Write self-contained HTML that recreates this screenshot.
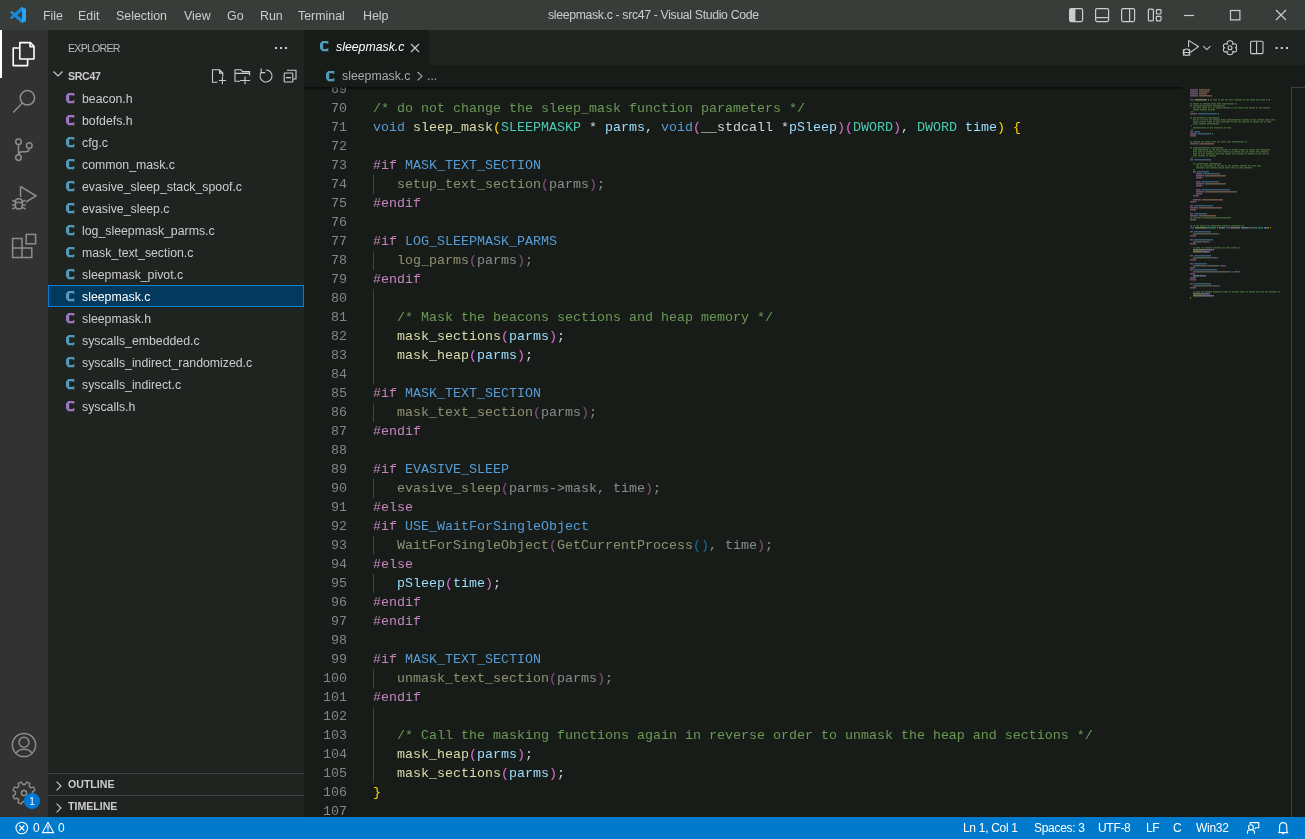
<!DOCTYPE html>
<html><head><meta charset="utf-8"><style>
*{margin:0;padding:0;box-sizing:border-box}
#root{position:absolute;left:0;top:0;width:1305px;height:839px;overflow:hidden;will-change:transform}
html,body{width:1305px;height:839px;overflow:hidden;background:#181c18;font-family:"Liberation Sans",sans-serif}
.abs{position:absolute}
svg{overflow:visible}
#title{position:absolute;left:0;top:0;width:1305px;height:30px;background:#393d39}
.menu{position:absolute;top:8px;font-size:12.4px;color:#cccccc;line-height:16px}
#ttl{position:absolute;left:548px;top:7px;font-size:12.3px;letter-spacing:-0.35px;color:#cccccc;line-height:16px}
#act{position:absolute;left:0;top:30px;width:48px;height:787px;background:#323232}
#side{position:absolute;left:48px;top:30px;width:256px;height:787px;background:#202420}
#tabs{position:absolute;left:304px;top:30px;width:1001px;height:35px;background:#202420}
#tab{position:absolute;left:0;top:0;width:125px;height:35px;background:#181c18}
#bc{position:absolute;left:304px;top:65px;width:1001px;height:22px;background:#181c18}
#ed{position:absolute;left:304px;top:87px;width:1001px;height:730px;background:#181c18;overflow:hidden}
#code{position:absolute;left:0;top:-87px;width:1001px;height:817px}
.ln{position:absolute;left:0;width:43px;text-align:right;font-family:"Liberation Mono",monospace;font-size:13.33px;line-height:19px;height:19px;color:#858585;white-space:pre}
.cl{position:absolute;left:69.0px;font-family:"Liberation Mono",monospace;font-size:13.33px;line-height:19px;height:19px;white-space:pre}
.guide{position:absolute;left:69px;width:1px;height:19px;background:#404040}
#shadow{position:absolute;left:304px;top:87px;width:878px;height:3px;background:linear-gradient(#00000099,#00000022)}
.mm{position:absolute;height:2px;opacity:.45;border-bottom:1px solid rgba(26,29,27,.45)}
#status{position:absolute;left:0;top:817px;width:1305px;height:22px;background:#007acc;color:#fff;font-size:12px;letter-spacing:-0.3px}
#status span{position:absolute;top:3.5px;line-height:14px}
.row{position:absolute;left:0;width:256px;height:22px;color:#cccccc;font-size:12.3px;line-height:24px}
.fn{position:absolute;left:34px;top:0}
.sec{position:absolute;left:0;width:256px;height:22px;border-top:1px solid #414141;color:#cccccc;font-size:10.6px;font-weight:bold;line-height:21px}
</style></head><body><div id="root">
<div id="title">
<svg class="abs" style="left:10px;top:7px" width="16" height="16" viewBox="0 0 100 100"><path fill="#1a86d4" fill-rule="evenodd" d="M70.9 99.3c1.6.6 3.4.6 5-.2l20.6-9.9c2.2-1 3.5-3.2 3.5-5.6V16.4c0-2.4-1.4-4.6-3.5-5.6L75.9.9c-2.1-1-4.5-.8-6.4.6-.3.2-.5.4-.7.7L29.4 38.2 12.3 25.2c-1.6-1.2-3.8-1.1-5.3.2L1.5 30.5c-1.8 1.7-1.8 4.5 0 6.2L16.3 50 1.5 63.4c-1.8 1.7-1.8 4.5 0 6.2l5.5 5c1.5 1.4 3.7 1.5 5.3.3l17.1-13 39.4 35.9c.6.6 1.3 1.1 2.1 1.4zm4.1-72.1L45.1 50 75 72.7V27.2z"/><path fill="#2aa4f0" d="M75.5 1L96.5 10.8Q100 12.6 100 16.4V83.6Q100 87.4 96.5 89.2L75.5 99Z"/></svg>
<div class="menu" style="left:43px">File</div><div class="menu" style="left:78px">Edit</div><div class="menu" style="left:116px">Selection</div><div class="menu" style="left:184px">View</div><div class="menu" style="left:227px">Go</div><div class="menu" style="left:260px">Run</div><div class="menu" style="left:298px">Terminal</div><div class="menu" style="left:363px">Help</div>
<div id="ttl">sleepmask.c - src47 - Visual Studio Code</div>
<svg class="abs" style="left:0;top:0" width="1305" height="30">
<g fill="none" stroke="#cccccc" stroke-width="1.2">
<rect x="1069.6" y="8.6" width="13" height="13" rx="1.5"/>
<rect x="1095.6" y="8.6" width="13" height="13" rx="1.5"/><path d="M1095.6 17.6H1108.6"/>
<rect x="1121.6" y="8.6" width="13" height="13" rx="1.5"/><path d="M1129.6 8.6V21.6"/>
<rect x="1148.4" y="9.2" width="5" height="11.6" rx="1"/>
<rect x="1156.4" y="9.6" width="4.6" height="4.4" rx=".8"/>
<rect x="1156.4" y="16.4" width="4.6" height="4.4" rx=".8"/>
<path d="M1184 15.5H1194"/>
<rect x="1230.5" y="10.5" width="9.4" height="9.4"/>
<path d="M1276 10L1286 20M1286 10L1276 20"/>
</g>
<rect x="1070" y="9" width="5.4" height="12.4" fill="#cccccc"/>
</svg>
</div>
<div id="act"><svg class="abs" style="left:0;top:0" width="48" height="787" viewBox="0 30 48 787">
<rect x="0" y="30" width="2" height="48" fill="#ffffff"/>
<g fill="none" stroke="#ffffff" stroke-width="1.6" stroke-linejoin="round">
<path d="M19.8 42.6H30.4L34 46.2V59H19.8Z"/>
<path d="M30 42.6V46.6H34"/>
<path d="M19.8 48H13.2V65.6H27.6V59"/>
</g>
<g fill="none" stroke="#8a8f8a" stroke-width="1.5">
<circle cx="27.4" cy="97.8" r="7.2"/>
<path d="M22.3 103L13.2 112.6"/>
<circle cx="18.5" cy="141.8" r="2.8"/>
<circle cx="18.5" cy="157.6" r="2.8"/>
<circle cx="29.3" cy="145.6" r="2.8"/>
<path d="M18.5 144.6V154.8"/>
<path d="M29.3 148.4Q29 151.6 25.5 151.8H22Q18.8 152 18.6 154.8"/>
<path d="M20.5 186.5V197M20.5 186.5L36 195.8L26 202"/>
<rect x="15.4" y="198.8" width="6.8" height="10.2" rx="3"/>
<path d="M15.4 202.4H22.2M12.2 200.2L15.4 202M25.4 200.2L22.2 202M12 204.9H15.4M22.2 204.9H25.6M12.2 209L15.4 207.4M25.4 209L22.2 207.4"/>
<path d="M12.6 238.6H22V248H31.8V257.6H12.6ZM12.6 248H22V257.6"/>
<rect x="26.2" y="234.4" width="9.4" height="9.4"/>
<circle cx="24" cy="745" r="11.6"/>
<circle cx="24" cy="742.2" r="5"/>
<path d="M15.6 753.4Q18.5 749.2 24 749.2Q29.5 749.2 32.4 753.4"/>
</g>
<g transform="translate(24 793)">
<path fill="none" stroke="#8a8f8a" stroke-width="1.4" stroke-linejoin="round" d="M1.12 -8.53L2.73 -10.96L5.82 -9.69L5.24 -6.82L6.82 -5.24L9.69 -5.82L10.96 -2.73L8.53 -1.12L8.53 1.12L10.96 2.73L9.69 5.82L6.82 5.24L5.24 6.82L5.82 9.69L2.73 10.96L1.12 8.53L-1.12 8.53L-2.73 10.96L-5.82 9.69L-5.24 6.82L-6.82 5.24L-9.69 5.82L-10.96 2.73L-8.53 1.12L-8.53 -1.12L-10.96 -2.73L-9.69 -5.82L-6.82 -5.24L-5.24 -6.82L-5.82 -9.69L-2.73 -10.96L-1.12 -8.53Z"/>
<circle cx="0" cy="0" r="2.6" fill="none" stroke="#8a8f8a" stroke-width="1.5"/>
</g>
<circle cx="32" cy="801" r="8" fill="#0078d4"/>
<text x="32" y="804.6" font-family="Liberation Sans" font-size="10" fill="#fff" text-anchor="middle">1</text>
</svg></div>
<div id="side">
<div class="abs" style="left:20px;top:12px;font-size:10.6px;letter-spacing:-0.75px;color:#bbbbbb;line-height:12px">EXPLORER</div>
<svg class="abs" style="left:0;top:0" width="256" height="60">
<g fill="#cccccc"><rect x="227" y="17" width="2" height="2"/><rect x="232" y="17" width="2" height="2"/><rect x="237" y="17" width="2" height="2"/></g>
<g fill="none" stroke="#cccccc" stroke-width="1.1">
<path d="M5.5 41.5L10 46L14.5 41.5"/>
<path d="M169.5 52.3H164.5V39.8H171.5L174.8 43.1V46.5M171.5 39.8V43.1H174.8"/>
<path d="M170.8 50.5H178M174.4 46.8V54.2"/>
<path d="M192 51.2H187V39.8H193L194.6 41.6H201.6V45.5M187 43.4H201.6"/>
<path d="M192 50.5H202M197 46.6V54.2"/>
<path d="M213.4 42.2A6 6 0 1 0 217.8 40"/><path d="M213.2 38.6V42.6H217.2"/>
<rect x="236.2" y="43" width="8.6" height="9" rx=".8"/><path d="M239 40.2H248V49H244.8M237.8 47.6H243"/>
</g>
</svg>
<div class="abs" style="left:20px;top:40px;font-size:10.6px;letter-spacing:-0.3px;font-weight:bold;color:#cccccc;line-height:12px">SRC47</div>
<div class="row" style="top:57px;"><svg class="abs" style="left:18px;top:6px" width="9" height="11" viewBox="0 0 9 11"><path fill="#a074c4" d="M2.2 0H8.3V3.1H7.3V2.2H3.2V8H7.3V7H8.3V10.2H2.2L0 7.6V2.6Z"/></svg><span class="fn">beacon.h</span></div><div class="row" style="top:79px;"><svg class="abs" style="left:18px;top:6px" width="9" height="11" viewBox="0 0 9 11"><path fill="#a074c4" d="M2.2 0H8.3V3.1H7.3V2.2H3.2V8H7.3V7H8.3V10.2H2.2L0 7.6V2.6Z"/></svg><span class="fn">bofdefs.h</span></div><div class="row" style="top:101px;"><svg class="abs" style="left:18px;top:6px" width="9" height="11" viewBox="0 0 9 11"><path fill="#519aba" d="M2.2 0H8.3V3.1H7.3V2.2H3.2V8H7.3V7H8.3V10.2H2.2L0 7.6V2.6Z"/></svg><span class="fn">cfg.c</span></div><div class="row" style="top:123px;"><svg class="abs" style="left:18px;top:6px" width="9" height="11" viewBox="0 0 9 11"><path fill="#519aba" d="M2.2 0H8.3V3.1H7.3V2.2H3.2V8H7.3V7H8.3V10.2H2.2L0 7.6V2.6Z"/></svg><span class="fn">common_mask.c</span></div><div class="row" style="top:145px;"><svg class="abs" style="left:18px;top:6px" width="9" height="11" viewBox="0 0 9 11"><path fill="#519aba" d="M2.2 0H8.3V3.1H7.3V2.2H3.2V8H7.3V7H8.3V10.2H2.2L0 7.6V2.6Z"/></svg><span class="fn">evasive_sleep_stack_spoof.c</span></div><div class="row" style="top:167px;"><svg class="abs" style="left:18px;top:6px" width="9" height="11" viewBox="0 0 9 11"><path fill="#519aba" d="M2.2 0H8.3V3.1H7.3V2.2H3.2V8H7.3V7H8.3V10.2H2.2L0 7.6V2.6Z"/></svg><span class="fn">evasive_sleep.c</span></div><div class="row" style="top:189px;"><svg class="abs" style="left:18px;top:6px" width="9" height="11" viewBox="0 0 9 11"><path fill="#519aba" d="M2.2 0H8.3V3.1H7.3V2.2H3.2V8H7.3V7H8.3V10.2H2.2L0 7.6V2.6Z"/></svg><span class="fn">log_sleepmask_parms.c</span></div><div class="row" style="top:211px;"><svg class="abs" style="left:18px;top:6px" width="9" height="11" viewBox="0 0 9 11"><path fill="#519aba" d="M2.2 0H8.3V3.1H7.3V2.2H3.2V8H7.3V7H8.3V10.2H2.2L0 7.6V2.6Z"/></svg><span class="fn">mask_text_section.c</span></div><div class="row" style="top:233px;"><svg class="abs" style="left:18px;top:6px" width="9" height="11" viewBox="0 0 9 11"><path fill="#519aba" d="M2.2 0H8.3V3.1H7.3V2.2H3.2V8H7.3V7H8.3V10.2H2.2L0 7.6V2.6Z"/></svg><span class="fn">sleepmask_pivot.c</span></div><div class="row" style="top:255px;background:#04395e;outline:1px solid #007fd4;outline-offset:-1px;color:#fff;"><svg class="abs" style="left:18px;top:6px" width="9" height="11" viewBox="0 0 9 11"><path fill="#519aba" d="M2.2 0H8.3V3.1H7.3V2.2H3.2V8H7.3V7H8.3V10.2H2.2L0 7.6V2.6Z"/></svg><span class="fn">sleepmask.c</span></div><div class="row" style="top:277px;"><svg class="abs" style="left:18px;top:6px" width="9" height="11" viewBox="0 0 9 11"><path fill="#a074c4" d="M2.2 0H8.3V3.1H7.3V2.2H3.2V8H7.3V7H8.3V10.2H2.2L0 7.6V2.6Z"/></svg><span class="fn">sleepmask.h</span></div><div class="row" style="top:299px;"><svg class="abs" style="left:18px;top:6px" width="9" height="11" viewBox="0 0 9 11"><path fill="#519aba" d="M2.2 0H8.3V3.1H7.3V2.2H3.2V8H7.3V7H8.3V10.2H2.2L0 7.6V2.6Z"/></svg><span class="fn">syscalls_embedded.c</span></div><div class="row" style="top:321px;"><svg class="abs" style="left:18px;top:6px" width="9" height="11" viewBox="0 0 9 11"><path fill="#519aba" d="M2.2 0H8.3V3.1H7.3V2.2H3.2V8H7.3V7H8.3V10.2H2.2L0 7.6V2.6Z"/></svg><span class="fn">syscalls_indirect_randomized.c</span></div><div class="row" style="top:343px;"><svg class="abs" style="left:18px;top:6px" width="9" height="11" viewBox="0 0 9 11"><path fill="#519aba" d="M2.2 0H8.3V3.1H7.3V2.2H3.2V8H7.3V7H8.3V10.2H2.2L0 7.6V2.6Z"/></svg><span class="fn">syscalls_indirect.c</span></div><div class="row" style="top:365px;"><svg class="abs" style="left:18px;top:6px" width="9" height="11" viewBox="0 0 9 11"><path fill="#a074c4" d="M2.2 0H8.3V3.1H7.3V2.2H3.2V8H7.3V7H8.3V10.2H2.2L0 7.6V2.6Z"/></svg><span class="fn">syscalls.h</span></div>
<div class="sec" style="top:743px"><svg class="abs" style="left:8px;top:7px" width="6" height="10"><path d="M0.6 0.6L5 5L0.6 9.4" fill="none" stroke="#cccccc" stroke-width="1.1"/></svg><span class="abs" style="left:20px;top:0">OUTLINE</span></div>
<div class="sec" style="top:765px"><svg class="abs" style="left:8px;top:7px" width="6" height="10"><path d="M0.6 0.6L5 5L0.6 9.4" fill="none" stroke="#cccccc" stroke-width="1.1"/></svg><span class="abs" style="left:20px;top:0">TIMELINE</span></div>
</div>
<div id="tabs"><div id="tab"><svg class="abs" style="left:16px;top:11px" width="9" height="11" viewBox="0 0 9 11"><path fill="#519aba" d="M2.2 0H8.3V3.1H7.3V2.2H3.2V8H7.3V7H8.3V10.2H2.2L0 7.6V2.6Z"/></svg><span class="abs" style="left:32px;top:9px;font-size:12.3px;font-style:italic;color:#fff;line-height:16px">sleepmask.c</span>
<svg class="abs" style="left:106px;top:13px" width="10" height="10"><path d="M1 1L9 9M9 1L1 9" fill="none" stroke="#cccccc" stroke-width="1.1"/></svg></div>
<svg class="abs" style="left:0;top:0" width="1001" height="35"><g fill="none" stroke="#cccccc" stroke-width="1.1">
<path d="M884.6 10.4L894.4 16.6L886.6 22.2"/><path d="M884.6 10.4V17"/>
<circle cx="882.6" cy="22.2" r="3.2"/>
<path d="M879 19.5L880.5 21M886.2 19.5L884.7 21M878.5 22.5H886.5M879 25.5L880.5 24M886.2 25.5L884.7 24"/>
<path d="M899.2 16.2L902.8 19.6L906.4 16.2"/>
<circle cx="926" cy="17.8" r="2"/>
<path d="M926 10.8Q929.2 10.8 928.8 14.2Q932.6 12.6 932.6 16.2Q932.6 17.8 931 17.8Q932.6 17.8 932.6 19.4Q932.6 23 928.8 21.4Q929.2 24.8 926 24.8Q922.8 24.8 923.2 21.4Q919.4 23 919.4 19.4Q919.4 17.8 921 17.8Q919.4 17.8 919.4 16.2Q919.4 12.6 923.2 14.2Q922.8 10.8 926 10.8Z"/>
<rect x="946.6" y="11.2" width="12.4" height="12.4" rx="1"/><path d="M952.6 11.2V23.6"/>
</g><g fill="#cccccc"><rect x="971.6" y="17" width="2" height="2"/><rect x="976.8" y="17" width="2" height="2"/><rect x="982" y="17" width="2" height="2"/></g></svg>
</div>
<div id="bc"><svg class="abs" style="left:22px;top:6px" width="9" height="11" viewBox="0 0 9 11"><path fill="#519aba" d="M2.2 0H8.3V3.1H7.3V2.2H3.2V8H7.3V7H8.3V10.2H2.2L0 7.6V2.6Z"/></svg><span class="abs" style="left:38px;top:3px;font-size:12.3px;color:#a9a9a9;line-height:16px">sleepmask.c</span>
<svg class="abs" style="left:112px;top:6px" width="8" height="10"><path d="M1.5 1L6 5.2L1.5 9.4" fill="none" stroke="#a9a9a9" stroke-width="1.1"/></svg>
<span class="abs" style="left:123px;top:3px;font-size:12.3px;color:#a9a9a9;line-height:16px">...</span></div>
<div id="ed"><div id="code">
<div class="ln" style="top:80px">69</div><div class="ln" style="top:99px">70</div><div class="cl" style="top:99px"><span style="color:#6a9955">/* do not change the sleep_mask function parameters */</span></div><div class="ln" style="top:118px">71</div><div class="cl" style="top:118px"><span style="color:#569cd6">void</span><span style="color:#d4d4d4"> </span><span style="color:#dcdcaa">sleep_mask</span><span style="color:#ffd700">(</span><span style="color:#4ec9b0">SLEEPMASKP</span><span style="color:#d4d4d4"> * </span><span style="color:#9cdcfe">parms</span><span style="color:#d4d4d4">, </span><span style="color:#569cd6">void</span><span style="color:#da70d6">(</span><span style="color:#d4d4d4">__stdcall *</span><span style="color:#9cdcfe">pSleep</span><span style="color:#da70d6">)</span><span style="color:#da70d6">(</span><span style="color:#4ec9b0">DWORD</span><span style="color:#da70d6">)</span><span style="color:#d4d4d4">, </span><span style="color:#4ec9b0">DWORD</span><span style="color:#d4d4d4"> </span><span style="color:#9cdcfe">time</span><span style="color:#ffd700">)</span><span style="color:#d4d4d4"> </span><span style="color:#ffd700">{</span></div><div class="ln" style="top:137px">72</div><div class="ln" style="top:156px">73</div><div class="cl" style="top:156px"><span style="color:#c586c0">#if</span><span style="color:#d4d4d4"> </span><span style="color:#569cd6">MASK_TEXT_SECTION</span></div><div class="ln" style="top:175px">74</div><div class="guide" style="top:175px"></div><div class="cl" style="top:175px"><span style="color:#d4d4d4">   </span><span style="color:#dcdcaa;opacity:.6">setup_text_section</span><span style="color:#da70d6;opacity:.6">(</span><span style="color:#d4d4d4;opacity:.6">parms</span><span style="color:#da70d6;opacity:.6">)</span><span style="color:#d4d4d4;opacity:.6">;</span></div><div class="ln" style="top:194px">75</div><div class="cl" style="top:194px"><span style="color:#c586c0">#endif</span></div><div class="ln" style="top:213px">76</div><div class="ln" style="top:232px">77</div><div class="cl" style="top:232px"><span style="color:#c586c0">#if</span><span style="color:#d4d4d4"> </span><span style="color:#569cd6">LOG_SLEEPMASK_PARMS</span></div><div class="ln" style="top:251px">78</div><div class="guide" style="top:251px"></div><div class="cl" style="top:251px"><span style="color:#d4d4d4">   </span><span style="color:#dcdcaa;opacity:.6">log_parms</span><span style="color:#da70d6;opacity:.6">(</span><span style="color:#d4d4d4;opacity:.6">parms</span><span style="color:#da70d6;opacity:.6">)</span><span style="color:#d4d4d4;opacity:.6">;</span></div><div class="ln" style="top:270px">79</div><div class="cl" style="top:270px"><span style="color:#c586c0">#endif</span></div><div class="ln" style="top:289px">80</div><div class="guide" style="top:289px"></div><div class="ln" style="top:308px">81</div><div class="guide" style="top:308px"></div><div class="cl" style="top:308px"><span style="color:#d4d4d4">   </span><span style="color:#6a9955">/* Mask the beacons sections and heap memory */</span></div><div class="ln" style="top:327px">82</div><div class="guide" style="top:327px"></div><div class="cl" style="top:327px"><span style="color:#d4d4d4">   </span><span style="color:#dcdcaa">mask_sections</span><span style="color:#da70d6">(</span><span style="color:#9cdcfe">parms</span><span style="color:#da70d6">)</span><span style="color:#d4d4d4">;</span></div><div class="ln" style="top:346px">83</div><div class="guide" style="top:346px"></div><div class="cl" style="top:346px"><span style="color:#d4d4d4">   </span><span style="color:#dcdcaa">mask_heap</span><span style="color:#da70d6">(</span><span style="color:#9cdcfe">parms</span><span style="color:#da70d6">)</span><span style="color:#d4d4d4">;</span></div><div class="ln" style="top:365px">84</div><div class="guide" style="top:365px"></div><div class="ln" style="top:384px">85</div><div class="cl" style="top:384px"><span style="color:#c586c0">#if</span><span style="color:#d4d4d4"> </span><span style="color:#569cd6">MASK_TEXT_SECTION</span></div><div class="ln" style="top:403px">86</div><div class="guide" style="top:403px"></div><div class="cl" style="top:403px"><span style="color:#d4d4d4">   </span><span style="color:#dcdcaa;opacity:.6">mask_text_section</span><span style="color:#da70d6;opacity:.6">(</span><span style="color:#d4d4d4;opacity:.6">parms</span><span style="color:#da70d6;opacity:.6">)</span><span style="color:#d4d4d4;opacity:.6">;</span></div><div class="ln" style="top:422px">87</div><div class="cl" style="top:422px"><span style="color:#c586c0">#endif</span></div><div class="ln" style="top:441px">88</div><div class="ln" style="top:460px">89</div><div class="cl" style="top:460px"><span style="color:#c586c0">#if</span><span style="color:#d4d4d4"> </span><span style="color:#569cd6">EVASIVE_SLEEP</span></div><div class="ln" style="top:479px">90</div><div class="guide" style="top:479px"></div><div class="cl" style="top:479px"><span style="color:#d4d4d4">   </span><span style="color:#dcdcaa;opacity:.6">evasive_sleep</span><span style="color:#da70d6;opacity:.6">(</span><span style="color:#d4d4d4;opacity:.6">parms</span><span style="color:#d4d4d4;opacity:.6">-&gt;</span><span style="color:#d4d4d4;opacity:.6">mask</span><span style="color:#d4d4d4;opacity:.6">, </span><span style="color:#d4d4d4;opacity:.6">time</span><span style="color:#da70d6;opacity:.6">)</span><span style="color:#d4d4d4;opacity:.6">;</span></div><div class="ln" style="top:498px">91</div><div class="cl" style="top:498px"><span style="color:#c586c0">#else</span></div><div class="ln" style="top:517px">92</div><div class="cl" style="top:517px"><span style="color:#c586c0">#if</span><span style="color:#d4d4d4"> </span><span style="color:#569cd6">USE_WaitForSingleObject</span></div><div class="ln" style="top:536px">93</div><div class="guide" style="top:536px"></div><div class="cl" style="top:536px"><span style="color:#d4d4d4">   </span><span style="color:#dcdcaa;opacity:.6">WaitForSingleObject</span><span style="color:#da70d6;opacity:.6">(</span><span style="color:#dcdcaa;opacity:.6">GetCurrentProcess</span><span style="color:#179fff;opacity:.6">()</span><span style="color:#d4d4d4;opacity:.6">, </span><span style="color:#d4d4d4;opacity:.6">time</span><span style="color:#da70d6;opacity:.6">)</span><span style="color:#d4d4d4;opacity:.6">;</span></div><div class="ln" style="top:555px">94</div><div class="cl" style="top:555px"><span style="color:#c586c0">#else</span></div><div class="ln" style="top:574px">95</div><div class="guide" style="top:574px"></div><div class="cl" style="top:574px"><span style="color:#d4d4d4">   </span><span style="color:#9cdcfe">pSleep</span><span style="color:#da70d6">(</span><span style="color:#9cdcfe">time</span><span style="color:#da70d6">)</span><span style="color:#d4d4d4">;</span></div><div class="ln" style="top:593px">96</div><div class="cl" style="top:593px"><span style="color:#c586c0">#endif</span></div><div class="ln" style="top:612px">97</div><div class="cl" style="top:612px"><span style="color:#c586c0">#endif</span></div><div class="ln" style="top:631px">98</div><div class="ln" style="top:650px">99</div><div class="cl" style="top:650px"><span style="color:#c586c0">#if</span><span style="color:#d4d4d4"> </span><span style="color:#569cd6">MASK_TEXT_SECTION</span></div><div class="ln" style="top:669px">100</div><div class="guide" style="top:669px"></div><div class="cl" style="top:669px"><span style="color:#d4d4d4">   </span><span style="color:#dcdcaa;opacity:.6">unmask_text_section</span><span style="color:#da70d6;opacity:.6">(</span><span style="color:#d4d4d4;opacity:.6">parms</span><span style="color:#da70d6;opacity:.6">)</span><span style="color:#d4d4d4;opacity:.6">;</span></div><div class="ln" style="top:688px">101</div><div class="cl" style="top:688px"><span style="color:#c586c0">#endif</span></div><div class="ln" style="top:707px">102</div><div class="guide" style="top:707px"></div><div class="ln" style="top:726px">103</div><div class="guide" style="top:726px"></div><div class="cl" style="top:726px"><span style="color:#d4d4d4">   </span><span style="color:#6a9955">/* Call the masking functions again in reverse order to unmask the heap and sections */</span></div><div class="ln" style="top:745px">104</div><div class="guide" style="top:745px"></div><div class="cl" style="top:745px"><span style="color:#d4d4d4">   </span><span style="color:#dcdcaa">mask_heap</span><span style="color:#da70d6">(</span><span style="color:#9cdcfe">parms</span><span style="color:#da70d6">)</span><span style="color:#d4d4d4">;</span></div><div class="ln" style="top:764px">105</div><div class="guide" style="top:764px"></div><div class="cl" style="top:764px"><span style="color:#d4d4d4">   </span><span style="color:#dcdcaa">mask_sections</span><span style="color:#da70d6">(</span><span style="color:#9cdcfe">parms</span><span style="color:#da70d6">)</span><span style="color:#d4d4d4">;</span></div><div class="ln" style="top:783px">106</div><div class="cl" style="top:783px"><span style="color:#ffd700">}</span></div><div class="ln" style="top:802px">107</div>
<div class="mm" style="left:886px;top:89px;width:8px;background:#c586c0"></div><div class="mm" style="left:895px;top:89px;width:11px;background:#ce9178"></div><div class="mm" style="left:886px;top:91px;width:8px;background:#c586c0"></div><div class="mm" style="left:895px;top:91px;width:10px;background:#ce9178"></div><div class="mm" style="left:886px;top:93px;width:8px;background:#c586c0"></div><div class="mm" style="left:895px;top:93px;width:8px;background:#ce9178"></div><div class="mm" style="left:886px;top:95px;width:8px;background:#c586c0"></div><div class="mm" style="left:895px;top:95px;width:13px;background:#ce9178"></div><div class="mm" style="left:886px;top:99px;width:4px;background:#569cd6"></div><div class="mm" style="left:891px;top:99px;width:12px;background:#dcdcaa"></div><div class="mm" style="left:904px;top:99px;width:1px;background:#d4d4d4"></div><div class="mm" style="left:906px;top:99px;width:2px;background:#6a9955"></div><div class="mm" style="left:909px;top:99px;width:4px;background:#6a9955"></div><div class="mm" style="left:914px;top:99px;width:2px;background:#6a9955"></div><div class="mm" style="left:917px;top:99px;width:3px;background:#6a9955"></div><div class="mm" style="left:921px;top:99px;width:3px;background:#6a9955"></div><div class="mm" style="left:925px;top:99px;width:4px;background:#6a9955"></div><div class="mm" style="left:930px;top:99px;width:8px;background:#6a9955"></div><div class="mm" style="left:939px;top:99px;width:2px;background:#6a9955"></div><div class="mm" style="left:942px;top:99px;width:3px;background:#6a9955"></div><div class="mm" style="left:946px;top:99px;width:5px;background:#6a9955"></div><div class="mm" style="left:952px;top:99px;width:4px;background:#6a9955"></div><div class="mm" style="left:957px;top:99px;width:4px;background:#6a9955"></div><div class="mm" style="left:962px;top:99px;width:2px;background:#6a9955"></div><div class="mm" style="left:965px;top:99px;width:1px;background:#d4d4d4"></div><div class="mm" style="left:886px;top:103px;width:2px;background:#6a9955"></div><div class="mm" style="left:889px;top:103px;width:6px;background:#6a9955"></div><div class="mm" style="left:896px;top:103px;width:2px;background:#6a9955"></div><div class="mm" style="left:899px;top:103px;width:7px;background:#6a9955"></div><div class="mm" style="left:907px;top:103px;width:5px;background:#6a9955"></div><div class="mm" style="left:913px;top:103px;width:4px;background:#6a9955"></div><div class="mm" style="left:918px;top:103px;width:12px;background:#6a9955"></div><div class="mm" style="left:931px;top:103px;width:2px;background:#6a9955"></div><div class="mm" style="left:886px;top:105px;width:2px;background:#6a9955"></div><div class="mm" style="left:889px;top:105px;width:19px;background:#6a9955"></div><div class="mm" style="left:909px;top:105px;width:12px;background:#6a9955"></div><div class="mm" style="left:889px;top:107px;width:3px;background:#6a9955"></div><div class="mm" style="left:893px;top:107px;width:4px;background:#6a9955"></div><div class="mm" style="left:898px;top:107px;width:5px;background:#6a9955"></div><div class="mm" style="left:904px;top:107px;width:2px;background:#6a9955"></div><div class="mm" style="left:907px;top:107px;width:1px;background:#6a9955"></div><div class="mm" style="left:909px;top:107px;width:2px;background:#6a9955"></div><div class="mm" style="left:912px;top:107px;width:6px;background:#6a9955"></div><div class="mm" style="left:919px;top:107px;width:7px;background:#6a9955"></div><div class="mm" style="left:927px;top:107px;width:2px;background:#6a9955"></div><div class="mm" style="left:930px;top:107px;width:3px;background:#6a9955"></div><div class="mm" style="left:934px;top:107px;width:5px;background:#6a9955"></div><div class="mm" style="left:940px;top:107px;width:4px;background:#6a9955"></div><div class="mm" style="left:945px;top:107px;width:6px;background:#6a9955"></div><div class="mm" style="left:952px;top:107px;width:2px;background:#6a9955"></div><div class="mm" style="left:955px;top:107px;width:3px;background:#6a9955"></div><div class="mm" style="left:959px;top:107px;width:7px;background:#6a9955"></div><div class="mm" style="left:889px;top:109px;width:6px;background:#6a9955"></div><div class="mm" style="left:896px;top:109px;width:7px;background:#6a9955"></div><div class="mm" style="left:904px;top:109px;width:7px;background:#6a9955"></div><div class="mm" style="left:887px;top:111px;width:2px;background:#6a9955"></div><div class="mm" style="left:886px;top:113px;width:7px;background:#c586c0"></div><div class="mm" style="left:894px;top:113px;width:19px;background:#569cd6"></div><div class="mm" style="left:914px;top:113px;width:1px;background:#b5cea8"></div><div class="mm" style="left:886px;top:117px;width:2px;background:#6a9955"></div><div class="mm" style="left:889px;top:117px;width:13px;background:#6a9955"></div><div class="mm" style="left:903px;top:117px;width:12px;background:#6a9955"></div><div class="mm" style="left:889px;top:119px;width:3px;background:#6a9955"></div><div class="mm" style="left:893px;top:119px;width:2px;background:#6a9955"></div><div class="mm" style="left:896px;top:119px;width:1px;background:#6a9955"></div><div class="mm" style="left:898px;top:119px;width:2px;background:#6a9955"></div><div class="mm" style="left:901px;top:119px;width:3px;background:#6a9955"></div><div class="mm" style="left:905px;top:119px;width:3px;background:#6a9955"></div><div class="mm" style="left:909px;top:119px;width:7px;background:#6a9955"></div><div class="mm" style="left:917px;top:119px;width:5px;background:#6a9955"></div><div class="mm" style="left:923px;top:119px;width:14px;background:#6a9955"></div><div class="mm" style="left:938px;top:119px;width:7px;background:#6a9955"></div><div class="mm" style="left:946px;top:119px;width:2px;background:#6a9955"></div><div class="mm" style="left:949px;top:119px;width:3px;background:#6a9955"></div><div class="mm" style="left:953px;top:119px;width:7px;background:#6a9955"></div><div class="mm" style="left:961px;top:119px;width:5px;background:#6a9955"></div><div class="mm" style="left:967px;top:119px;width:4px;background:#6a9955"></div><div class="mm" style="left:889px;top:121px;width:5px;background:#6a9955"></div><div class="mm" style="left:895px;top:121px;width:7px;background:#6a9955"></div><div class="mm" style="left:903px;top:121px;width:5px;background:#6a9955"></div><div class="mm" style="left:909px;top:121px;width:2px;background:#6a9955"></div><div class="mm" style="left:912px;top:121px;width:4px;background:#6a9955"></div><div class="mm" style="left:917px;top:121px;width:9px;background:#6a9955"></div><div class="mm" style="left:927px;top:121px;width:2px;background:#6a9955"></div><div class="mm" style="left:930px;top:121px;width:3px;background:#6a9955"></div><div class="mm" style="left:934px;top:121px;width:3px;background:#6a9955"></div><div class="mm" style="left:938px;top:121px;width:7px;background:#6a9955"></div><div class="mm" style="left:946px;top:121px;width:2px;background:#6a9955"></div><div class="mm" style="left:949px;top:121px;width:6px;background:#6a9955"></div><div class="mm" style="left:956px;top:121px;width:3px;background:#6a9955"></div><div class="mm" style="left:960px;top:121px;width:2px;background:#6a9955"></div><div class="mm" style="left:963px;top:121px;width:4px;background:#6a9955"></div><div class="mm" style="left:889px;top:123px;width:5px;background:#6a9955"></div><div class="mm" style="left:895px;top:123px;width:7px;background:#6a9955"></div><div class="mm" style="left:903px;top:123px;width:12px;background:#6a9955"></div><div class="mm" style="left:887px;top:125px;width:1px;background:#6a9955"></div><div class="mm" style="left:889px;top:127px;width:13px;background:#6a9955"></div><div class="mm" style="left:903px;top:127px;width:2px;background:#6a9955"></div><div class="mm" style="left:906px;top:127px;width:3px;background:#6a9955"></div><div class="mm" style="left:910px;top:127px;width:9px;background:#6a9955"></div><div class="mm" style="left:920px;top:127px;width:2px;background:#6a9955"></div><div class="mm" style="left:923px;top:127px;width:4px;background:#6a9955"></div><div class="mm" style="left:887px;top:129px;width:2px;background:#6a9955"></div><div class="mm" style="left:886px;top:131px;width:3px;background:#c586c0"></div><div class="mm" style="left:890px;top:131px;width:6px;background:#569cd6"></div><div class="mm" style="left:886px;top:133px;width:7px;background:#c586c0"></div><div class="mm" style="left:894px;top:133px;width:13px;background:#569cd6"></div><div class="mm" style="left:908px;top:133px;width:1px;background:#b5cea8"></div><div class="mm" style="left:886px;top:135px;width:6px;background:#c586c0"></div><div class="mm" style="left:886px;top:141px;width:2px;background:#6a9955"></div><div class="mm" style="left:889px;top:141px;width:7px;background:#6a9955"></div><div class="mm" style="left:897px;top:141px;width:3px;background:#6a9955"></div><div class="mm" style="left:901px;top:141px;width:6px;background:#6a9955"></div><div class="mm" style="left:908px;top:141px;width:4px;background:#6a9955"></div><div class="mm" style="left:913px;top:141px;width:3px;background:#6a9955"></div><div class="mm" style="left:917px;top:141px;width:5px;background:#6a9955"></div><div class="mm" style="left:923px;top:141px;width:4px;background:#6a9955"></div><div class="mm" style="left:928px;top:141px;width:12px;background:#6a9955"></div><div class="mm" style="left:941px;top:141px;width:2px;background:#6a9955"></div><div class="mm" style="left:886px;top:143px;width:8px;background:#c586c0"></div><div class="mm" style="left:895px;top:143px;width:15px;background:#ce9178"></div><div class="mm" style="left:886px;top:147px;width:2px;background:#6a9955"></div><div class="mm" style="left:889px;top:147px;width:17px;background:#6a9955"></div><div class="mm" style="left:907px;top:147px;width:12px;background:#6a9955"></div><div class="mm" style="left:889px;top:149px;width:4px;background:#6a9955"></div><div class="mm" style="left:894px;top:149px;width:10px;background:#6a9955"></div><div class="mm" style="left:905px;top:149px;width:2px;background:#6a9955"></div><div class="mm" style="left:908px;top:149px;width:3px;background:#6a9955"></div><div class="mm" style="left:912px;top:149px;width:4px;background:#6a9955"></div><div class="mm" style="left:917px;top:149px;width:7px;background:#6a9955"></div><div class="mm" style="left:925px;top:149px;width:2px;background:#6a9955"></div><div class="mm" style="left:928px;top:149px;width:6px;background:#6a9955"></div><div class="mm" style="left:935px;top:149px;width:6px;background:#6a9955"></div><div class="mm" style="left:942px;top:149px;width:2px;background:#6a9955"></div><div class="mm" style="left:945px;top:149px;width:6px;background:#6a9955"></div><div class="mm" style="left:952px;top:149px;width:4px;background:#6a9955"></div><div class="mm" style="left:957px;top:149px;width:9px;background:#6a9955"></div><div class="mm" style="left:889px;top:151px;width:4px;background:#6a9955"></div><div class="mm" style="left:894px;top:151px;width:4px;background:#6a9955"></div><div class="mm" style="left:899px;top:151px;width:2px;background:#6a9955"></div><div class="mm" style="left:902px;top:151px;width:7px;background:#6a9955"></div><div class="mm" style="left:910px;top:151px;width:3px;background:#6a9955"></div><div class="mm" style="left:914px;top:151px;width:4px;background:#6a9955"></div><div class="mm" style="left:919px;top:151px;width:7px;background:#6a9955"></div><div class="mm" style="left:927px;top:151px;width:2px;background:#6a9955"></div><div class="mm" style="left:930px;top:151px;width:6px;background:#6a9955"></div><div class="mm" style="left:937px;top:151px;width:4px;background:#6a9955"></div><div class="mm" style="left:942px;top:151px;width:2px;background:#6a9955"></div><div class="mm" style="left:945px;top:151px;width:6px;background:#6a9955"></div><div class="mm" style="left:952px;top:151px;width:3px;background:#6a9955"></div><div class="mm" style="left:956px;top:151px;width:8px;background:#6a9955"></div><div class="mm" style="left:889px;top:153px;width:4px;background:#6a9955"></div><div class="mm" style="left:894px;top:153px;width:2px;background:#6a9955"></div><div class="mm" style="left:897px;top:153px;width:4px;background:#6a9955"></div><div class="mm" style="left:902px;top:153px;width:9px;background:#6a9955"></div><div class="mm" style="left:912px;top:153px;width:4px;background:#6a9955"></div><div class="mm" style="left:917px;top:153px;width:3px;background:#6a9955"></div><div class="mm" style="left:921px;top:153px;width:6px;background:#6a9955"></div><div class="mm" style="left:928px;top:153px;width:4px;background:#6a9955"></div><div class="mm" style="left:933px;top:153px;width:7px;background:#6a9955"></div><div class="mm" style="left:941px;top:153px;width:2px;background:#6a9955"></div><div class="mm" style="left:944px;top:153px;width:6px;background:#6a9955"></div><div class="mm" style="left:951px;top:153px;width:2px;background:#6a9955"></div><div class="mm" style="left:954px;top:153px;width:3px;background:#6a9955"></div><div class="mm" style="left:958px;top:153px;width:4px;background:#6a9955"></div><div class="mm" style="left:963px;top:153px;width:2px;background:#6a9955"></div><div class="mm" style="left:889px;top:155px;width:4px;background:#6a9955"></div><div class="mm" style="left:894px;top:155px;width:7px;background:#6a9955"></div><div class="mm" style="left:902px;top:155px;width:2px;background:#6a9955"></div><div class="mm" style="left:905px;top:155px;width:7px;background:#6a9955"></div><div class="mm" style="left:887px;top:157px;width:2px;background:#6a9955"></div><div class="mm" style="left:886px;top:159px;width:3px;background:#c586c0"></div><div class="mm" style="left:890px;top:159px;width:17px;background:#569cd6"></div><div class="mm" style="left:889px;top:163px;width:2px;background:#6a9955"></div><div class="mm" style="left:892px;top:163px;width:12px;background:#6a9955"></div><div class="mm" style="left:905px;top:163px;width:12px;background:#6a9955"></div><div class="mm" style="left:892px;top:165px;width:3px;background:#6a9955"></div><div class="mm" style="left:896px;top:165px;width:3px;background:#6a9955"></div><div class="mm" style="left:900px;top:165px;width:9px;background:#6a9955"></div><div class="mm" style="left:910px;top:165px;width:2px;background:#6a9955"></div><div class="mm" style="left:913px;top:165px;width:3px;background:#6a9955"></div><div class="mm" style="left:917px;top:165px;width:3px;background:#6a9955"></div><div class="mm" style="left:921px;top:165px;width:2px;background:#6a9955"></div><div class="mm" style="left:924px;top:165px;width:3px;background:#6a9955"></div><div class="mm" style="left:928px;top:165px;width:7px;background:#6a9955"></div><div class="mm" style="left:936px;top:165px;width:7px;background:#6a9955"></div><div class="mm" style="left:944px;top:165px;width:3px;background:#6a9955"></div><div class="mm" style="left:948px;top:165px;width:4px;background:#6a9955"></div><div class="mm" style="left:953px;top:165px;width:4px;background:#6a9955"></div><div class="mm" style="left:892px;top:167px;width:9px;background:#6a9955"></div><div class="mm" style="left:902px;top:167px;width:3px;background:#6a9955"></div><div class="mm" style="left:906px;top:167px;width:7px;background:#6a9955"></div><div class="mm" style="left:914px;top:167px;width:6px;background:#6a9955"></div><div class="mm" style="left:921px;top:167px;width:5px;background:#6a9955"></div><div class="mm" style="left:927px;top:167px;width:4px;background:#6a9955"></div><div class="mm" style="left:932px;top:167px;width:2px;background:#6a9955"></div><div class="mm" style="left:935px;top:167px;width:4px;background:#6a9955"></div><div class="mm" style="left:940px;top:167px;width:8px;background:#6a9955"></div><div class="mm" style="left:889px;top:169px;width:2px;background:#6a9955"></div><div class="mm" style="left:889px;top:171px;width:3px;background:#c586c0"></div><div class="mm" style="left:893px;top:171px;width:12px;background:#569cd6"></div><div class="mm" style="left:892px;top:173px;width:6px;background:#c586c0"></div><div class="mm" style="left:899px;top:173px;width:17px;background:#569cd6"></div><div class="mm" style="left:892px;top:175px;width:8px;background:#c586c0"></div><div class="mm" style="left:901px;top:175px;width:21px;background:#ce9178"></div><div class="mm" style="left:892px;top:177px;width:6px;background:#c586c0"></div><div class="mm" style="left:892px;top:181px;width:5px;background:#c586c0"></div><div class="mm" style="left:898px;top:181px;width:17px;background:#569cd6"></div><div class="mm" style="left:892px;top:183px;width:8px;background:#c586c0"></div><div class="mm" style="left:901px;top:183px;width:21px;background:#ce9178"></div><div class="mm" style="left:892px;top:185px;width:6px;background:#c586c0"></div><div class="mm" style="left:892px;top:189px;width:5px;background:#c586c0"></div><div class="mm" style="left:898px;top:189px;width:28px;background:#569cd6"></div><div class="mm" style="left:892px;top:191px;width:8px;background:#c586c0"></div><div class="mm" style="left:901px;top:191px;width:32px;background:#ce9178"></div><div class="mm" style="left:892px;top:193px;width:6px;background:#c586c0"></div><div class="mm" style="left:889px;top:195px;width:6px;background:#c586c0"></div><div class="mm" style="left:889px;top:199px;width:8px;background:#c586c0"></div><div class="mm" style="left:898px;top:199px;width:21px;background:#ce9178"></div><div class="mm" style="left:886px;top:201px;width:6px;background:#c586c0"></div><div class="mm" style="left:886px;top:205px;width:3px;background:#c586c0"></div><div class="mm" style="left:890px;top:205px;width:19px;background:#569cd6"></div><div class="mm" style="left:886px;top:207px;width:8px;background:#c586c0"></div><div class="mm" style="left:895px;top:207px;width:23px;background:#ce9178"></div><div class="mm" style="left:886px;top:209px;width:6px;background:#c586c0"></div><div class="mm" style="left:886px;top:213px;width:3px;background:#c586c0"></div><div class="mm" style="left:890px;top:213px;width:13px;background:#569cd6"></div><div class="mm" style="left:886px;top:215px;width:8px;background:#c586c0"></div><div class="mm" style="left:895px;top:215px;width:17px;background:#ce9178"></div><div class="mm" style="left:886px;top:217px;width:2px;background:#6a9955"></div><div class="mm" style="left:889px;top:217px;width:8px;background:#6a9955"></div><div class="mm" style="left:898px;top:217px;width:29px;background:#6a9955"></div><div class="mm" style="left:886px;top:219px;width:6px;background:#c586c0"></div><div class="mm" style="left:886px;top:225px;width:2px;background:#6a9955"></div><div class="mm" style="left:889px;top:225px;width:2px;background:#6a9955"></div><div class="mm" style="left:892px;top:225px;width:3px;background:#6a9955"></div><div class="mm" style="left:896px;top:225px;width:6px;background:#6a9955"></div><div class="mm" style="left:903px;top:225px;width:3px;background:#6a9955"></div><div class="mm" style="left:907px;top:225px;width:10px;background:#6a9955"></div><div class="mm" style="left:918px;top:225px;width:8px;background:#6a9955"></div><div class="mm" style="left:927px;top:225px;width:10px;background:#6a9955"></div><div class="mm" style="left:938px;top:225px;width:2px;background:#6a9955"></div><div class="mm" style="left:886px;top:227px;width:4px;background:#569cd6"></div><div class="mm" style="left:891px;top:227px;width:10px;background:#dcdcaa"></div><div class="mm" style="left:901px;top:227px;width:1px;background:#ffd700"></div><div class="mm" style="left:902px;top:227px;width:10px;background:#4ec9b0"></div><div class="mm" style="left:913px;top:227px;width:1px;background:#d4d4d4"></div><div class="mm" style="left:915px;top:227px;width:5px;background:#9cdcfe"></div><div class="mm" style="left:920px;top:227px;width:1px;background:#d4d4d4"></div><div class="mm" style="left:922px;top:227px;width:4px;background:#569cd6"></div><div class="mm" style="left:926px;top:227px;width:1px;background:#da70d6"></div><div class="mm" style="left:927px;top:227px;width:9px;background:#d4d4d4"></div><div class="mm" style="left:937px;top:227px;width:1px;background:#d4d4d4"></div><div class="mm" style="left:938px;top:227px;width:6px;background:#9cdcfe"></div><div class="mm" style="left:944px;top:227px;width:1px;background:#da70d6"></div><div class="mm" style="left:945px;top:227px;width:1px;background:#da70d6"></div><div class="mm" style="left:946px;top:227px;width:5px;background:#4ec9b0"></div><div class="mm" style="left:951px;top:227px;width:1px;background:#da70d6"></div><div class="mm" style="left:952px;top:227px;width:1px;background:#d4d4d4"></div><div class="mm" style="left:954px;top:227px;width:5px;background:#4ec9b0"></div><div class="mm" style="left:960px;top:227px;width:4px;background:#9cdcfe"></div><div class="mm" style="left:964px;top:227px;width:1px;background:#ffd700"></div><div class="mm" style="left:966px;top:227px;width:1px;background:#ffd700"></div><div class="mm" style="left:886px;top:231px;width:3px;background:#c586c0"></div><div class="mm" style="left:890px;top:231px;width:17px;background:#569cd6"></div><div class="mm" style="left:889px;top:233px;width:18px;background:#dcdcaa;opacity:.3"></div><div class="mm" style="left:907px;top:233px;width:1px;background:#da70d6;opacity:.3"></div><div class="mm" style="left:908px;top:233px;width:5px;background:#d4d4d4;opacity:.3"></div><div class="mm" style="left:913px;top:233px;width:1px;background:#da70d6;opacity:.3"></div><div class="mm" style="left:914px;top:233px;width:1px;background:#d4d4d4;opacity:.3"></div><div class="mm" style="left:886px;top:235px;width:6px;background:#c586c0"></div><div class="mm" style="left:886px;top:239px;width:3px;background:#c586c0"></div><div class="mm" style="left:890px;top:239px;width:19px;background:#569cd6"></div><div class="mm" style="left:889px;top:241px;width:9px;background:#dcdcaa;opacity:.3"></div><div class="mm" style="left:898px;top:241px;width:1px;background:#da70d6;opacity:.3"></div><div class="mm" style="left:899px;top:241px;width:5px;background:#d4d4d4;opacity:.3"></div><div class="mm" style="left:904px;top:241px;width:1px;background:#da70d6;opacity:.3"></div><div class="mm" style="left:905px;top:241px;width:1px;background:#d4d4d4;opacity:.3"></div><div class="mm" style="left:886px;top:243px;width:6px;background:#c586c0"></div><div class="mm" style="left:889px;top:247px;width:2px;background:#6a9955"></div><div class="mm" style="left:892px;top:247px;width:4px;background:#6a9955"></div><div class="mm" style="left:897px;top:247px;width:3px;background:#6a9955"></div><div class="mm" style="left:901px;top:247px;width:7px;background:#6a9955"></div><div class="mm" style="left:909px;top:247px;width:8px;background:#6a9955"></div><div class="mm" style="left:918px;top:247px;width:3px;background:#6a9955"></div><div class="mm" style="left:922px;top:247px;width:4px;background:#6a9955"></div><div class="mm" style="left:927px;top:247px;width:6px;background:#6a9955"></div><div class="mm" style="left:934px;top:247px;width:2px;background:#6a9955"></div><div class="mm" style="left:889px;top:249px;width:13px;background:#dcdcaa"></div><div class="mm" style="left:902px;top:249px;width:1px;background:#da70d6"></div><div class="mm" style="left:903px;top:249px;width:5px;background:#9cdcfe"></div><div class="mm" style="left:908px;top:249px;width:1px;background:#da70d6"></div><div class="mm" style="left:909px;top:249px;width:1px;background:#d4d4d4"></div><div class="mm" style="left:889px;top:251px;width:9px;background:#dcdcaa"></div><div class="mm" style="left:898px;top:251px;width:1px;background:#da70d6"></div><div class="mm" style="left:899px;top:251px;width:5px;background:#9cdcfe"></div><div class="mm" style="left:904px;top:251px;width:1px;background:#da70d6"></div><div class="mm" style="left:905px;top:251px;width:1px;background:#d4d4d4"></div><div class="mm" style="left:886px;top:255px;width:3px;background:#c586c0"></div><div class="mm" style="left:890px;top:255px;width:17px;background:#569cd6"></div><div class="mm" style="left:889px;top:257px;width:17px;background:#dcdcaa;opacity:.3"></div><div class="mm" style="left:906px;top:257px;width:1px;background:#da70d6;opacity:.3"></div><div class="mm" style="left:907px;top:257px;width:5px;background:#d4d4d4;opacity:.3"></div><div class="mm" style="left:912px;top:257px;width:1px;background:#da70d6;opacity:.3"></div><div class="mm" style="left:913px;top:257px;width:1px;background:#d4d4d4;opacity:.3"></div><div class="mm" style="left:886px;top:259px;width:6px;background:#c586c0"></div><div class="mm" style="left:886px;top:263px;width:3px;background:#c586c0"></div><div class="mm" style="left:890px;top:263px;width:13px;background:#569cd6"></div><div class="mm" style="left:889px;top:265px;width:13px;background:#dcdcaa;opacity:.3"></div><div class="mm" style="left:902px;top:265px;width:1px;background:#da70d6;opacity:.3"></div><div class="mm" style="left:903px;top:265px;width:5px;background:#d4d4d4;opacity:.3"></div><div class="mm" style="left:908px;top:265px;width:2px;background:#d4d4d4;opacity:.3"></div><div class="mm" style="left:910px;top:265px;width:4px;background:#d4d4d4;opacity:.3"></div><div class="mm" style="left:914px;top:265px;width:1px;background:#d4d4d4;opacity:.3"></div><div class="mm" style="left:916px;top:265px;width:4px;background:#d4d4d4;opacity:.3"></div><div class="mm" style="left:920px;top:265px;width:1px;background:#da70d6;opacity:.3"></div><div class="mm" style="left:921px;top:265px;width:1px;background:#d4d4d4;opacity:.3"></div><div class="mm" style="left:886px;top:267px;width:5px;background:#c586c0"></div><div class="mm" style="left:886px;top:269px;width:3px;background:#c586c0"></div><div class="mm" style="left:890px;top:269px;width:23px;background:#569cd6"></div><div class="mm" style="left:889px;top:271px;width:19px;background:#dcdcaa;opacity:.3"></div><div class="mm" style="left:908px;top:271px;width:1px;background:#da70d6;opacity:.3"></div><div class="mm" style="left:909px;top:271px;width:17px;background:#dcdcaa;opacity:.3"></div><div class="mm" style="left:926px;top:271px;width:2px;background:#179fff;opacity:.3"></div><div class="mm" style="left:928px;top:271px;width:1px;background:#d4d4d4;opacity:.3"></div><div class="mm" style="left:930px;top:271px;width:4px;background:#d4d4d4;opacity:.3"></div><div class="mm" style="left:934px;top:271px;width:1px;background:#da70d6;opacity:.3"></div><div class="mm" style="left:935px;top:271px;width:1px;background:#d4d4d4;opacity:.3"></div><div class="mm" style="left:886px;top:273px;width:5px;background:#c586c0"></div><div class="mm" style="left:889px;top:275px;width:6px;background:#9cdcfe"></div><div class="mm" style="left:895px;top:275px;width:1px;background:#da70d6"></div><div class="mm" style="left:896px;top:275px;width:4px;background:#9cdcfe"></div><div class="mm" style="left:900px;top:275px;width:1px;background:#da70d6"></div><div class="mm" style="left:901px;top:275px;width:1px;background:#d4d4d4"></div><div class="mm" style="left:886px;top:277px;width:6px;background:#c586c0"></div><div class="mm" style="left:886px;top:279px;width:6px;background:#c586c0"></div><div class="mm" style="left:886px;top:283px;width:3px;background:#c586c0"></div><div class="mm" style="left:890px;top:283px;width:17px;background:#569cd6"></div><div class="mm" style="left:889px;top:285px;width:19px;background:#dcdcaa;opacity:.3"></div><div class="mm" style="left:908px;top:285px;width:1px;background:#da70d6;opacity:.3"></div><div class="mm" style="left:909px;top:285px;width:5px;background:#d4d4d4;opacity:.3"></div><div class="mm" style="left:914px;top:285px;width:1px;background:#da70d6;opacity:.3"></div><div class="mm" style="left:915px;top:285px;width:1px;background:#d4d4d4;opacity:.3"></div><div class="mm" style="left:886px;top:287px;width:6px;background:#c586c0"></div><div class="mm" style="left:889px;top:291px;width:2px;background:#6a9955"></div><div class="mm" style="left:892px;top:291px;width:4px;background:#6a9955"></div><div class="mm" style="left:897px;top:291px;width:3px;background:#6a9955"></div><div class="mm" style="left:901px;top:291px;width:7px;background:#6a9955"></div><div class="mm" style="left:909px;top:291px;width:9px;background:#6a9955"></div><div class="mm" style="left:919px;top:291px;width:5px;background:#6a9955"></div><div class="mm" style="left:925px;top:291px;width:2px;background:#6a9955"></div><div class="mm" style="left:928px;top:291px;width:7px;background:#6a9955"></div><div class="mm" style="left:936px;top:291px;width:5px;background:#6a9955"></div><div class="mm" style="left:942px;top:291px;width:2px;background:#6a9955"></div><div class="mm" style="left:945px;top:291px;width:6px;background:#6a9955"></div><div class="mm" style="left:952px;top:291px;width:3px;background:#6a9955"></div><div class="mm" style="left:956px;top:291px;width:4px;background:#6a9955"></div><div class="mm" style="left:961px;top:291px;width:3px;background:#6a9955"></div><div class="mm" style="left:965px;top:291px;width:8px;background:#6a9955"></div><div class="mm" style="left:974px;top:291px;width:2px;background:#6a9955"></div><div class="mm" style="left:889px;top:293px;width:9px;background:#dcdcaa"></div><div class="mm" style="left:898px;top:293px;width:1px;background:#da70d6"></div><div class="mm" style="left:899px;top:293px;width:5px;background:#9cdcfe"></div><div class="mm" style="left:904px;top:293px;width:1px;background:#da70d6"></div><div class="mm" style="left:905px;top:293px;width:1px;background:#d4d4d4"></div><div class="mm" style="left:889px;top:295px;width:13px;background:#dcdcaa"></div><div class="mm" style="left:902px;top:295px;width:1px;background:#da70d6"></div><div class="mm" style="left:903px;top:295px;width:5px;background:#9cdcfe"></div><div class="mm" style="left:908px;top:295px;width:1px;background:#da70d6"></div><div class="mm" style="left:909px;top:295px;width:1px;background:#d4d4d4"></div><div class="mm" style="left:886px;top:297px;width:1px;background:#ffd700"></div>
<div class="abs" style="left:987px;top:87px;width:1px;height:730px;background:#3f3f3f"></div>
<div class="abs" style="left:987px;top:87px;width:14px;height:1px;background:#3f3f3f"></div>
</div></div>
<div id="shadow"></div>
<div id="status">
<svg class="abs" style="left:0;top:0" width="70" height="22"><g fill="none" stroke="#fff" stroke-width="1.1">
<circle cx="21.8" cy="11" r="5.8"/><path d="M19.3 8.5L24.3 13.5M24.3 8.5L19.3 13.5"/>
<path d="M48 5.5L53.6 15.6H42.4Z"/></g><g fill="#fff"><rect x="47.4" y="8.6" width="1.2" height="4"/><rect x="47.4" y="13.4" width="1.2" height="1.2"/></g></svg>
<span style="left:33px">0</span><span style="left:58px">0</span>
<span style="left:963px">Ln 1, Col 1</span>
<span style="left:1034px">Spaces: 3</span>
<span style="left:1098px">UTF-8</span>
<span style="left:1146px">LF</span>
<span style="left:1173px">C</span>
<span style="left:1196px">Win32</span>
<svg class="abs" style="left:1240px;top:0" width="60" height="22"><g fill="none" stroke="#fff" stroke-width="1.1">
<path d="M10.2 7.2V5.6H18.8V10.8H15.8L14.8 12"/>
<circle cx="11" cy="10.2" r="2.4"/>
<path d="M7.5 16.8V15Q7.5 12.6 11 12.6Q14.5 12.6 14.5 15V16.8"/>
<path d="M38.8 15.6H47.6L46.8 14V9.6Q46.8 5.6 43.2 5.6Q39.6 5.6 39.6 9.6V14Z"/>
<path d="M42.3 16.6H44.1"/>
</g></svg>
</div>
</div></body></html>
